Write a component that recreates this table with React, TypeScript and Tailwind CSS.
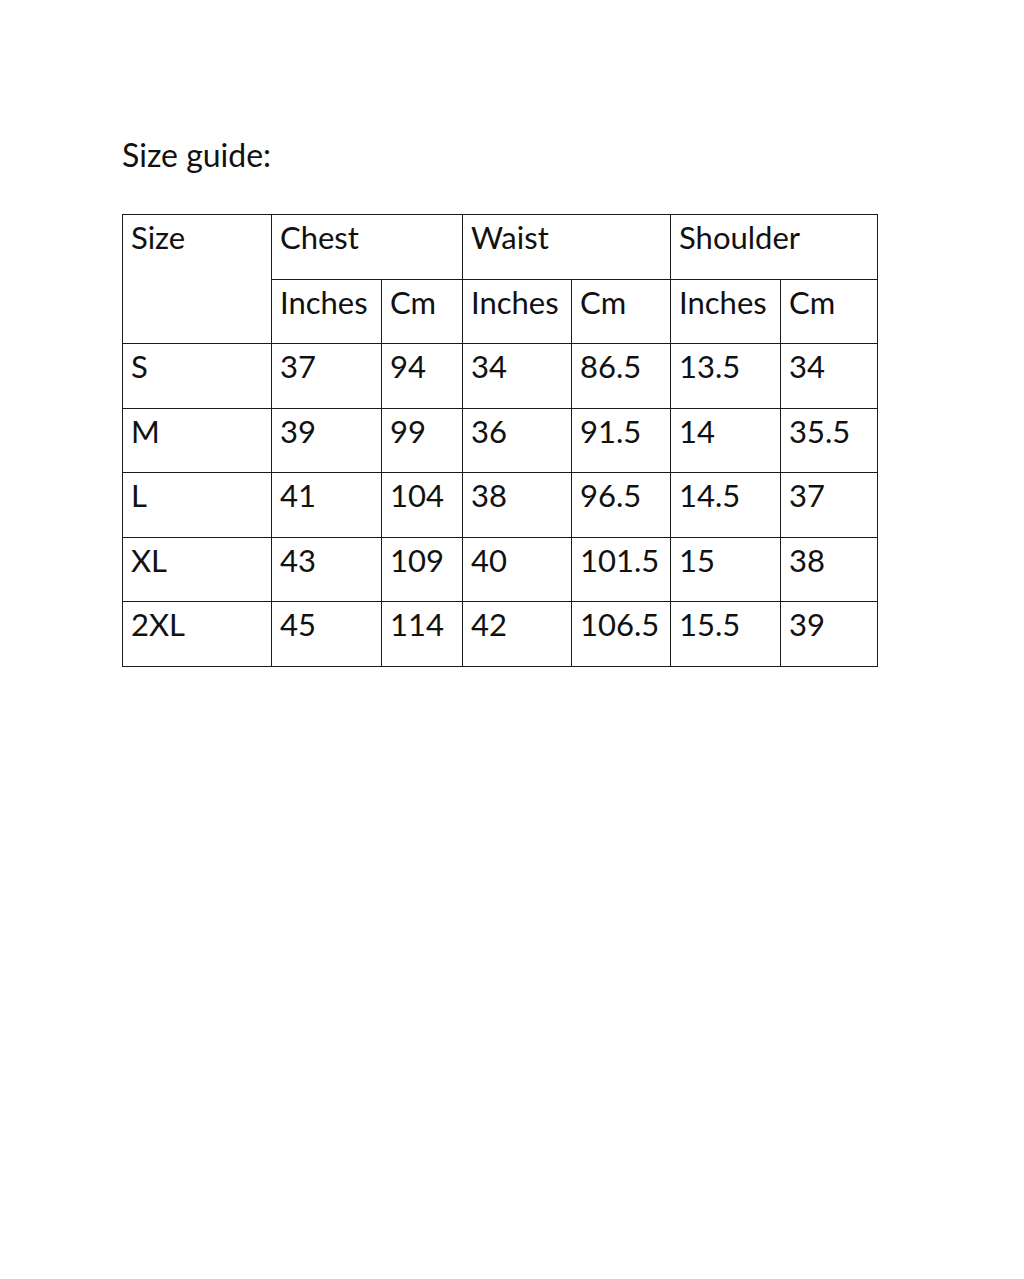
import React from "react";

const rows = [
  ["S", "37", "94", "34", "86.5", "13.5", "34"],
  ["M", "39", "99", "36", "91.5", "14", "35.5"],
  ["L", "41", "104", "38", "96.5", "14.5", "37"],
  ["XL", "43", "109", "40", "101.5", "15", "38"],
  ["2XL", "45", "114", "42", "106.5", "15.5", "39"],
];

const cell =
  "border-[1.5px] border-[#1a1a1a] align-top text-left pl-[8px] pt-[4px] h-[64.5px] font-normal";

export default function App() {
  return (
    <div
      className="w-[1024px] h-[1279px] bg-white text-[#111] pl-[122px] pt-[136px]"
      style={{ fontFamily: "Lato, 'Open Sans', sans-serif" }}
    >
      <h1 className="text-[32px] leading-[38px] font-normal">Size guide:</h1>
      <table className="mt-[40px] border-collapse table-fixed w-[755px] text-[31px] leading-[37px]">
        <colgroup>
          <col className="w-[149px]" />
          <col className="w-[110px]" />
          <col className="w-[81px]" />
          <col className="w-[109px]" />
          <col className="w-[99px]" />
          <col className="w-[110px]" />
          <col className="w-[97px]" />
        </colgroup>
        <thead>
          <tr>
            <th rowSpan={2} className={cell}>Size</th>
            <th colSpan={2} className={cell}>Chest</th>
            <th colSpan={2} className={cell}>Waist</th>
            <th colSpan={2} className={cell}>Shoulder</th>
          </tr>
          <tr>
            <th className={cell}>Inches</th>
            <th className={cell}>Cm</th>
            <th className={cell}>Inches</th>
            <th className={cell}>Cm</th>
            <th className={cell}>Inches</th>
            <th className={cell}>Cm</th>
          </tr>
        </thead>
        <tbody>
          {rows.map((r) => (
            <tr key={r[0]}>
              {r.map((v, i) => (
                <td key={i} className={cell}>{v}</td>
              ))}
            </tr>
          ))}
        </tbody>
      </table>
    </div>
  );
}
